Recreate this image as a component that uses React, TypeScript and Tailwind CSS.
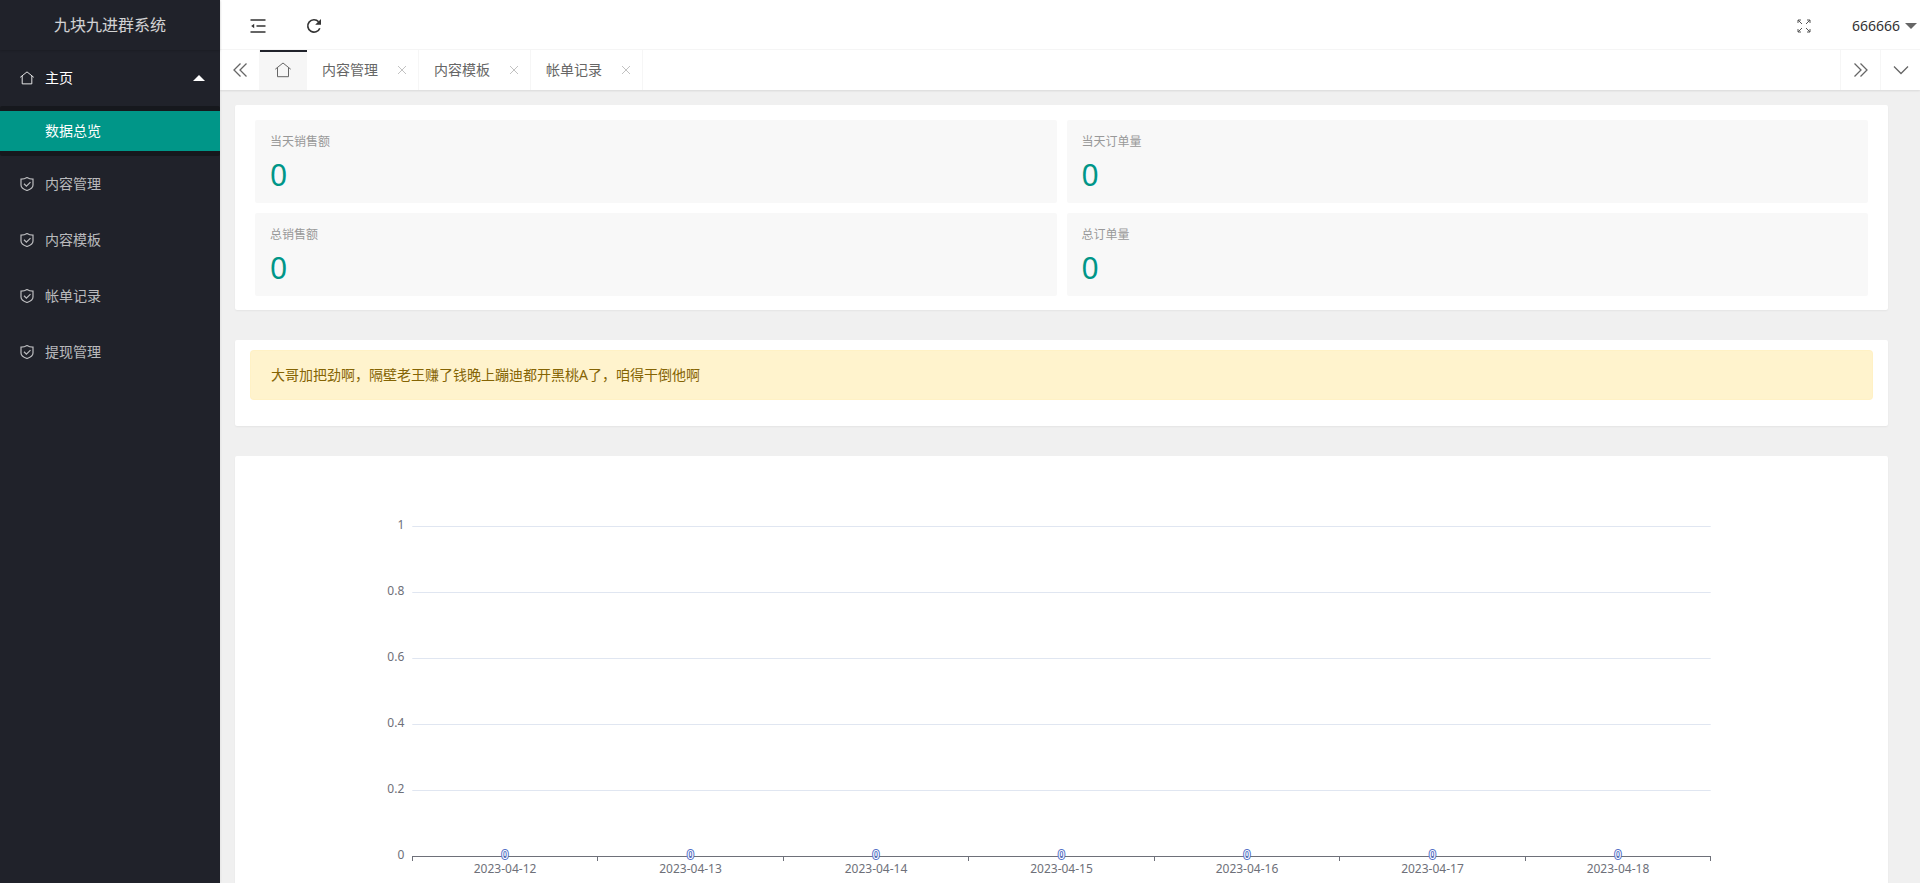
import type { ReactNode } from "react";

const FONT = "font-['Noto_Sans','Noto_Sans_CJK_SC',sans-serif]";

const menuItems = ["内容管理", "内容模板", "帐单记录", "提现管理"];

const tabs = ["内容管理", "内容模板", "帐单记录"];

const stats = [
  { label: "当天销售额", value: 0 },
  { label: "当天订单量", value: 0 },
  { label: "总销售额", value: 0 },
  { label: "总订单量", value: 0 },
];

const series = [
  { date: "2023-04-12", value: 0 },
  { date: "2023-04-13", value: 0 },
  { date: "2023-04-14", value: 0 },
  { date: "2023-04-15", value: 0 },
  { date: "2023-04-16", value: 0 },
  { date: "2023-04-17", value: 0 },
  { date: "2023-04-18", value: 0 },
];

const yTicks = [1, 0.8, 0.6, 0.4, 0.2, 0];

type IconProps = { className?: string };

function HomeIcon({ className }: IconProps) {
  return (
    <svg viewBox="0 0 16 16" fill="none" stroke="currentColor" className={className} aria-hidden="true">
      <path d="M0.3 7.2 8 1l7.7 6.2M2.5 5.7v9h11v-9" />
    </svg>
  );
}

function ShieldIcon({ className }: IconProps) {
  return (
    <svg viewBox="0 0 14 14" fill="none" stroke="currentColor" strokeWidth="1.2" className={className} aria-hidden="true">
      <path d="M7 0.6C5.3 1.7 3.2 2.2 1 2.2V8c0 2.7 2.6 4.4 6 5.5 3.4-1.1 6-2.8 6-5.5V2.2C10.8 2.2 8.7 1.7 7 0.6Z" />
      <path d="m4 6.8 2.4 2.3 4.1-4" />
    </svg>
  );
}

function ShrinkIcon({ className }: IconProps) {
  return (
    <svg viewBox="0 0 16 16" fill="none" stroke="currentColor" strokeWidth="1.4" className={className} aria-hidden="true">
      <path d="M0.5 2h15M6.5 8h9M0.5 14h15" />
      <path d="M4.2 5.8v4.4L1.2 8Z" fill="currentColor" stroke="none" />
    </svg>
  );
}

function RefreshIcon({ className }: IconProps) {
  return (
    <svg viewBox="0 0 16 16" fill="none" stroke="currentColor" strokeWidth="1.7" className={className} aria-hidden="true">
      <path d="M13.8 10.2A6.2 6.2 0 1 1 12.6 3.8" />
      <path d="M15 1v5.8H9.2Z" fill="currentColor" stroke="none" />
    </svg>
  );
}

function FullscreenIcon({ className }: IconProps) {
  return (
    <svg viewBox="0 0 14 14" fill="none" stroke="currentColor" className={className} aria-hidden="true">
      <path d="M1 4V1h3M1 1l4 4M10 1h3v3M13 1 9 5M1 10v3h3M1 13l4-4M10 13h3v-3M13 13 9 9" />
    </svg>
  );
}

function DoubleChevron({ className }: IconProps) {
  return (
    <svg viewBox="0 0 16 16" fill="none" stroke="currentColor" strokeWidth="1.3" className={className} aria-hidden="true">
      <path d="M8.5 1.5 2 8l6.5 6.5M14.5 1.5 8 8l6.5 6.5" />
    </svg>
  );
}

function Card({ className, children }: { className?: string; children: ReactNode }) {
  return (
    <section className={`rounded-xs bg-white shadow-[0_1px_2px_rgba(0,0,0,0.05)] ${className ?? ""}`}>
      {children}
    </section>
  );
}

function Sidebar() {
  return (
    <aside className="z-20 flex w-[220px] shrink-0 flex-col bg-[#20222A] text-sm text-white/70 shadow-[1px_0_2px_rgba(0,0,0,0.05)]">
      <h1 className="flex h-[50px] shrink-0 items-center justify-center text-base text-white/80 shadow-[0_1px_2px_rgba(0,0,0,0.15)]">
        九块九进群系统
      </h1>
      <nav>
        <a href="#home" className="flex h-14 items-center pr-[15px] pl-5 text-white">
          <HomeIcon className="mr-[11px] size-3.5" />
          主页
          <span className="ml-auto border-x-[6px] border-b-[6px] border-x-transparent border-b-white" />
        </a>
        <div className="rounded-xs bg-[#16181D] py-[5px]">
          <a href="#overview" className="flex h-10 items-center bg-[#009688] pl-[45px] text-white">
            数据总览
          </a>
        </div>
        {menuItems.map((item) => (
          <a key={item} href={`#${item}`} className="flex h-14 items-center pl-5 hover:text-white">
            <ShieldIcon className="mr-[11px] size-3.5" />
            {item}
          </a>
        ))}
      </nav>
    </aside>
  );
}

function Header() {
  return (
    <header className="flex h-[50px] shrink-0 items-center border-b border-[#f6f6f6] bg-white pt-0.5 text-sm text-[#333]">
      <button type="button" aria-label="侧边伸缩" className="ml-[30px] flex">
        <ShrinkIcon className="size-4" />
      </button>
      <button type="button" aria-label="刷新" className="ml-10 flex">
        <RefreshIcon className="size-4" />
      </button>
      <button type="button" aria-label="全屏" className="ml-auto flex text-[#555]">
        <FullscreenIcon className="size-3.5" />
      </button>
      <button type="button" className="mr-[3px] ml-[41px] flex items-center gap-[5px]">
        666666
        <span className="border-x-[6px] border-t-[6px] border-x-transparent border-t-[#666]" />
      </button>
    </header>
  );
}

function TabBar() {
  return (
    <div className="z-10 flex h-10 shrink-0 bg-white text-sm text-[#666] shadow-[0_1px_2px_rgba(0,0,0,0.1)]">
      <button type="button" aria-label="向左" className="flex w-10 items-center justify-center border-r border-[#f6f6f6]">
        <DoubleChevron className="size-4" />
      </button>
      <a
        href="#home"
        aria-label="主页"
        className="flex w-[47px] items-center border-t-2 border-[#20222A] bg-[#f6f6f6] pb-0.5 pl-[15px]"
      >
        <HomeIcon className="size-4" />
      </a>
      {tabs.map((tab) => (
        <div key={tab} className="flex w-28 items-center justify-between border-r border-[#f6f6f6] pr-3 pl-[15px]">
          <a href={`#${tab}`}>{tab}</a>
          <button type="button" aria-label={`关闭${tab}`} className="text-[#c2c2c2]">
            <svg viewBox="0 0 8 8" fill="none" stroke="currentColor" className="size-2" aria-hidden="true">
              <path d="M0 0l8 8M8 0 0 8" />
            </svg>
          </button>
        </div>
      ))}
      <button
        type="button"
        aria-label="向右"
        className="ml-auto flex w-10 items-center justify-center border-l border-[#f6f6f6]"
      >
        <DoubleChevron className="size-4 rotate-180" />
      </button>
      <button type="button" aria-label="更多" className="flex w-10 items-center justify-center border-l border-[#f6f6f6]">
        <svg viewBox="0 0 16 16" fill="none" stroke="currentColor" strokeWidth="1.3" className="size-4" aria-hidden="true">
          <path d="m1 4.5 7 7 7-7" />
        </svg>
      </button>
    </div>
  );
}

// plot area: 10% side margins, 60px top and bottom
function SalesChart() {
  const top = 60;
  const step = 66;
  const baseline = top + step * (yTicks.length - 1);
  const band = 80 / series.length;

  return (
    <svg className="h-[450px] w-full text-xs" role="img" aria-label="近七日销售额">
      {yTicks.map((tick, i) => (
        <g key={tick}>
          <line
            x1="10%"
            x2="90%"
            y1={top + i * step + 0.5}
            y2={top + i * step + 0.5}
            stroke={tick === 0 ? "#6E7079" : "#E0E6F1"}
          />
          <text x="10%" dx="-8" y={top + i * step + 3} textAnchor="end" fill="#6E7079">
            {tick}
          </text>
        </g>
      ))}
      {[...series, null].map((_, i) => (
        <line
          key={i}
          x1={`${10 + band * i}%`}
          x2={`${10 + band * i}%`}
          y1={baseline}
          y2={baseline + 5}
          stroke="#6E7079"
          shapeRendering="crispEdges"
        />
      ))}
      {series.map((point, i) => {
        const x = `${10 + band * (i + 0.5)}%`;
        return (
          <g key={point.date} textAnchor="middle">
            <text x={x} y={baseline + 17} fill="#6E7079">
              {point.date}
            </text>
            <text x={x} y={baseline + 3} fill="#fff" stroke="#5470C6" strokeWidth="2" paintOrder="stroke">
              {point.value}
            </text>
          </g>
        );
      })}
    </svg>
  );
}

export default function App() {
  return (
    <div className={`flex h-screen overflow-hidden bg-[#f0f0f0] ${FONT}`}>
      <Sidebar />
      <div className="flex min-w-0 flex-1 flex-col">
        <Header />
        <TabBar />
        <main className="flex min-h-0 flex-1 flex-col gap-[30px] overflow-hidden pt-[15px] pr-8 pl-[15px]">
          <Card className="grid shrink-0 grid-cols-2 gap-2.5 px-5 pt-[15px] pb-3.5">
            {stats.map((stat) => (
              <div key={stat.label} className="h-[83px] rounded-xs bg-[#f8f8f8] px-[15px] py-2.5">
                <h3 className="text-xs leading-6 text-[#999]">{stat.label}</h3>
                <p className="text-3xl leading-[42px] text-[#009688]">{stat.value}</p>
              </div>
            ))}
          </Card>
          <Card className="shrink-0 px-[15px] pt-2.5 pb-[26px]">
            <p role="alert" className="rounded border border-[#ffeeba]/40 bg-[#fff3cd] px-5 py-3 text-sm leading-6 text-[#856404]">
              大哥加把劲啊，隔壁老王赚了钱晚上蹦迪都开黑桃A了，咱得干倒他啊
            </p>
          </Card>
          <Card className="shrink-0 px-[15px] py-2.5">
            <SalesChart />
          </Card>
        </main>
      </div>
    </div>
  );
}
